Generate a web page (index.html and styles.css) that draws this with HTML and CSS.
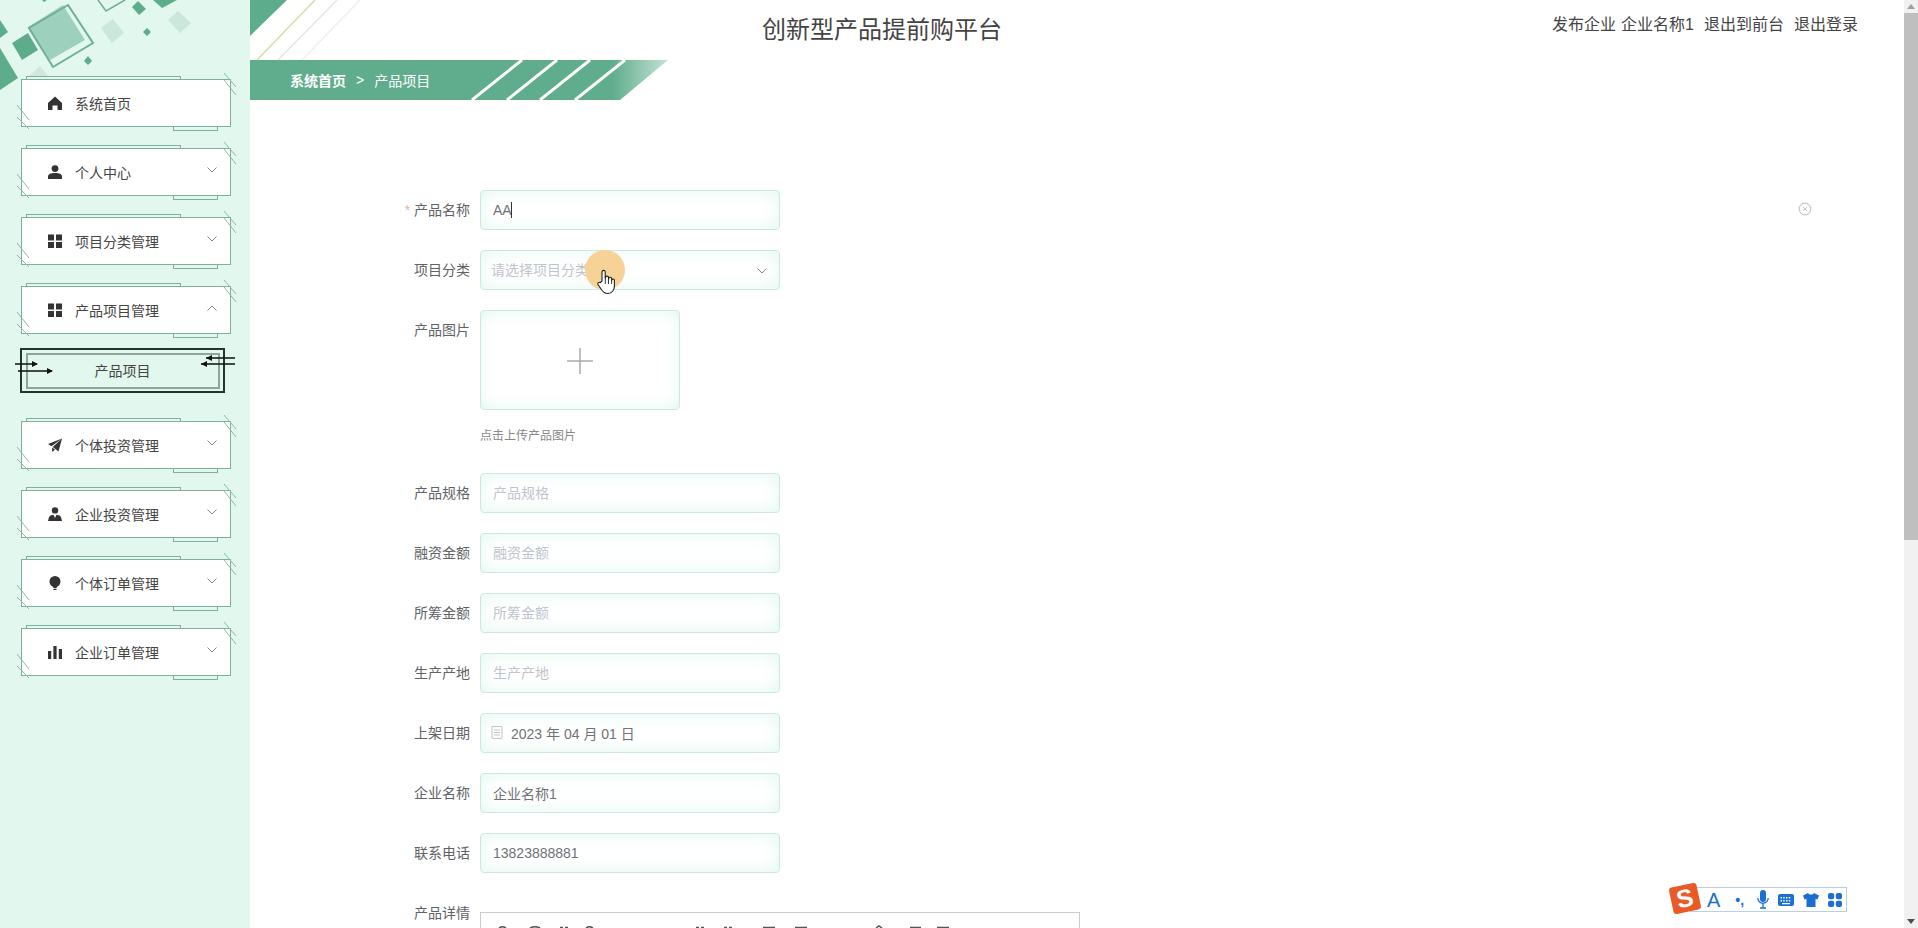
FILE: index.html
```html
<!DOCTYPE html>
<html lang="zh-CN">
<head>
    <meta charset="UTF-8">
    <title>创新型产品提前购平台</title>
    <link rel="stylesheet" href="styles.css">
</head>
<body>
    <svg class="defs" width="0" height="0">
        <symbol id="hatch" viewBox="0 0 230 64">
            <path d="M210 2l12 14M210 9l12 15M3 34l12 15M3 46l12 12" fill="none" stroke="#8db9a8" stroke-width="1"/>
        </symbol>
        <symbol id="chevron" viewBox="0 0 10 6">
            <path d="M0.5 0.5L5 5L9.5 0.5" fill="none" stroke="#666" stroke-width="0.8"/>
        </symbol>
    </svg>

    <div class="layout">
        <aside class="sidebar">
            <svg class="side-deco" width="250" height="90" viewBox="0 0 250 90">
                <path d="M40 66l9 11H28z" fill="#cfe8dd"/>
                <path d="M63 5l22 35-35 20-22-33z" fill="#9ed1bd"/>
                <path d="M68 5l25 38-40 24-24-39z" fill="none" stroke="#6fae97" stroke-width="2"/>
                <path d="M28 33l10 17-16 10-10-17zM0 48l18 30L0 90zM0 20l8 12-8 6zM138 1l8 8-7 6-7-8zM153 0l9 8 15-8zM42 0l2 2 3-2zM88 56l4 5-4 4-4-4zM147 28l4 4-4 4-4-4z" fill="#5dad8c"/>
                <path d="M113 19l11 14-12 10-11-15zM178 11l13 12-11 10-12-13z" fill="#cbe7db"/>
                <path d="M98 0l8 11 19-11" fill="none" stroke="#6fae97" stroke-width="1.5"/>
            </svg>
            <nav class="menu">
                <a class="menu-item">
                    <svg class="hatch"><use href="#hatch"/></svg>
                    <svg class="menu-icon" viewBox="0 0 14 14"><path d="M7 0.5L14 7V14H9.500V9.500H4.500V14H0V7z" fill="#333"/></svg>
                    系统首页
                </a>
                <a class="menu-item">
                    <svg class="hatch"><use href="#hatch"/></svg>
                    <svg class="menu-icon" viewBox="0 0 14 14"><circle cx="7" cy="3.600" r="3.400" fill="#333"/><path d="M0 14V11.500C0 9 3 8 7 8s7 1 7 3.500V14z" fill="#333"/></svg>
                    个人中心
                    <svg class="arrow"><use href="#chevron"/></svg>
                </a>
                <a class="menu-item">
                    <svg class="hatch"><use href="#hatch"/></svg>
                    <svg class="menu-icon" viewBox="0 0 14 14"><path d="M0 0.500h6v6H0zM8 0.500h6v6H8zM0 8h6v6H0zM8 8h6v6H8z" fill="#333"/></svg>
                    项目分类管理
                    <svg class="arrow"><use href="#chevron"/></svg>
                </a>
                <a class="menu-item">
                    <svg class="hatch"><use href="#hatch"/></svg>
                    <svg class="menu-icon" viewBox="0 0 14 14"><path d="M0 0.500h6v6H0zM8 0.500h6v6H8zM0 8h6v6H0zM8 8h6v6H8z" fill="#333"/></svg>
                    产品项目管理
                    <svg class="arrow arrow-up"><use href="#chevron"/></svg>
                </a>
                <a class="sub-item">
                    <svg class="sub-arrows" width="230" height="30" viewBox="0 0 230 30">
                        <path d="M0 6h22M3 13h34M220 0h-29M220 6h-34" stroke="#111" stroke-width="1.300" fill="none"/>
                        <path d="M17 3l6 3-6 3zM32 10l6 3-6 3zM197 -3l-6 3 6 3zM192 3l-6 3 6 3z" fill="#111"/>
                    </svg>
                    <span class="sub-inner">产品项目</span>
                </a>
                <a class="menu-item">
                    <svg class="hatch"><use href="#hatch"/></svg>
                    <svg class="menu-icon" viewBox="0 0 14 14"><path d="M14 0.500L0 6l3.500 2.200zM14 0.500L4.800 9 10.500 13.500zM4 9.500L4.300 14 7 11.500z" fill="#333"/></svg>
                    个体投资管理
                    <svg class="arrow"><use href="#chevron"/></svg>
                </a>
                <a class="menu-item">
                    <svg class="hatch"><use href="#hatch"/></svg>
                    <svg class="menu-icon" viewBox="0 0 14 14"><circle cx="7" cy="3.400" r="3.200" fill="#333"/><path d="M0 14L1 10C2 8.500 4 8 5.500 7.800L7 11l1.500-3.200C10 8 12 8.500 13 10l1 4z" fill="#333"/></svg>
                    企业投资管理
                    <svg class="arrow"><use href="#chevron"/></svg>
                </a>
                <a class="menu-item">
                    <svg class="hatch"><use href="#hatch"/></svg>
                    <svg class="menu-icon" viewBox="0 0 14 14"><circle cx="7" cy="5.500" r="5.500" fill="#333"/><path d="M4.500 9.500h5l-1 2.500h-3zM5.500 12.800h3V14h-3z" fill="#333"/></svg>
                    个体订单管理
                    <svg class="arrow"><use href="#chevron"/></svg>
                </a>
                <a class="menu-item">
                    <svg class="hatch"><use href="#hatch"/></svg>
                    <svg class="menu-icon" viewBox="0 0 14 14"><path d="M0 6h3.200v8H0zM5.400 1h3.200v13H5.400zM10.800 4H14v10h-3.200z" fill="#333"/></svg>
                    企业订单管理
                    <svg class="arrow"><use href="#chevron"/></svg>
                </a>
            </nav>
        </aside>

        <main class="main">
            <svg class="top-deco" width="130" height="60" viewBox="0 0 130 60">
                <path d="M0 0h37L0 36z" fill="#5dad8c"/>
                <path d="M65 0L7 60" stroke="#d6dda6" stroke-width="1.500"/>
                <path d="M87 0L28 60" stroke="#e6e6e6" stroke-width="1.500"/>
                <path d="M110 0L52 60" stroke="#efefef" stroke-width="1.500"/>
            </svg>
            <header class="header">
                <h1 class="title">创新型产品提前购平台</h1>
                <div class="user-links">
                    <span>发布企业</span>
                    <span class="user-name">企业名称1</span>
                    <a>退出到前台</a>
                    <a>退出登录</a>
                </div>
            </header>

            <div class="crumb">
                <svg class="crumb-bg" width="418" height="40" viewBox="0 0 418 40">
                    <defs>
                        <linearGradient id="crumbFade" x1="362" y1="0" x2="418" y2="0" gradientUnits="userSpaceOnUse">
                            <stop offset="0" stop-color="#5fad8c"/>
                            <stop offset="1" stop-color="#c4e2d5"/>
                        </linearGradient>
                    </defs>
                    <path d="M0 0H418L370 40H0z" fill="url(#crumbFade)"/>
                    <path d="M272 0L222 40M307 0L257 40M340 0L290 40M375 0L325 40" stroke="#fff" stroke-width="3"/>
                </svg>
                <b class="crumb-home">系统首页</b>
                <span class="crumb-sep">&gt;</span>
                <span>产品项目</span>
            </div>

            <form class="form">
                <div class="form-row">
                    <label class="form-label"><i class="required">*</i> 产品名称</label>
                    <div class="field-wrap">
                        <input class="field" type="text" value="AA">
                        <span class="caret"></span>
                    </div>
                    <svg class="clear-icon" width="14" height="14" viewBox="0 0 14 14">
                        <circle cx="7" cy="7" r="5.800" fill="none" stroke="#c8c8c8" stroke-width="1.200"/>
                        <path d="M5 5l4 4M9 5l-4 4" stroke="#c0c0c0"/>
                    </svg>
                </div>
                <div class="form-row">
                    <label class="form-label">项目分类</label>
                    <div class="field-wrap">
                        <input class="field field-select" type="text" placeholder="请选择项目分类">
                        <svg class="select-arrow"><use href="#chevron"/></svg>
                    </div>
                </div>
                <div class="form-row">
                    <label class="form-label">产品图片</label>
                    <div>
                        <div class="upload">
                            <svg width="26" height="26" viewBox="0 0 26 26"><path d="M13 0v26M0 13h26" stroke="#aaa" stroke-width="1.500"/></svg>
                        </div>
                        <p class="upload-tip">点击上传产品图片</p>
                    </div>
                </div>
                <div class="form-row">
                    <label class="form-label">产品规格</label>
                    <input class="field" type="text" placeholder="产品规格">
                </div>
                <div class="form-row">
                    <label class="form-label">融资金额</label>
                    <input class="field" type="text" placeholder="融资金额">
                </div>
                <div class="form-row">
                    <label class="form-label">所筹金额</label>
                    <input class="field" type="text" placeholder="所筹金额">
                </div>
                <div class="form-row">
                    <label class="form-label">生产产地</label>
                    <input class="field" type="text" placeholder="生产产地">
                </div>
                <div class="form-row">
                    <label class="form-label">上架日期</label>
                    <div class="field-wrap">
                        <input class="field field-date" type="text" value="2023 年 04 月 01 日">
                        <svg class="date-icon" width="12" height="13" viewBox="0 0 12 13">
                            <path d="M1 0.500h10v12H1zM3 4h6M3 6.500h6M3 9h6" fill="none" stroke="#c4c4c4"/>
                        </svg>
                    </div>
                </div>
                <div class="form-row">
                    <label class="form-label">企业名称</label>
                    <input class="field" type="text" value="企业名称1">
                </div>
                <div class="form-row">
                    <label class="form-label">联系电话</label>
                    <input class="field" type="text" value="13823888881">
                </div>
                <div class="form-row">
                    <label class="form-label">产品详情</label>
                    <div class="editor">
                        <svg class="editor-tools" width="600" height="20" viewBox="0 0 600 20">
                            <path d="M18 15q3.500-2.500 7 0M49 15q5-2.500 10 0M79 14.500h3M84 14.500h3M105 15q3.500-2.500 7 0M215 14.500h3M220 14.500h3M243 14.500h3M248 14.500h3M282 14.500h12M314 14.500h12M395 15l3-2 3 2M429 14.500h11M456 14.500h12" fill="none" stroke="#555" stroke-width="1.500"/>
                        </svg>
                    </div>
                </div>
            </form>
        </main>

        <div class="scrollbar">
            <span class="scroll-up"></span>
            <span class="scroll-thumb"></span>
            <span class="scroll-down"></span>
        </div>
    </div>

    <!-- 鼠标点击高亮 -->
    <div class="click-mark">
        <svg class="hand" width="20" height="26" viewBox="0 0 20 26">
            <path d="M5 12V3a1.600 1.600 0 0 1 3.200 0v7l0.300-1.500a1.500 1.500 0 0 1 3 0.300V10.500l0.300-1a1.400 1.400 0 0 1 2.800 0.400v1.600l0.300-0.700a1.300 1.300 0 0 1 2.500 0.500V17c0 4-2.400 7.500-6.500 7.500-3.500 0-5-1.500-6.500-4L1 15.500c-0.800-1.500 1-3 2.200-1.800z" fill="#fff" stroke="#222" stroke-width="1.100"/>
            <path d="M8.300 10v5M11.500 10v5M14.600 11v4" stroke="#222" stroke-width="0.900"/>
        </svg>
    </div>

    <!-- 搜狗输入法状态栏 -->
    <div class="ime-bar">
        <span class="ime-logo">S</span>
        <span class="ime-a">A</span>
        <span class="ime-punc">•,</span>
        <svg width="12" height="19" viewBox="0 0 12 19"><path d="M3 3a3 3 0 0 1 6 0v6a3 3 0 0 1-6 0z" fill="#1b6fd0"/><path d="M0.800 8a5.200 5.200 0 0 0 10.400 0M6 13.500V18M3 18h6" fill="none" stroke="#1b6fd0" stroke-width="1.300"/></svg>
        <svg width="16" height="12" viewBox="0 0 16 12"><rect width="16" height="12" rx="2" fill="#1b6fd0"/><path d="M2.500 3h1.500v1.500H2.500zM5.200 3h1.500v1.500H5.200zM8 3h1.500v1.500H8zM10.800 3h1.500v1.500h-1.500zM2.500 6h1.500v1.500H2.500zM5.200 6h1.500v1.500H5.200zM8 6h1.500v1.500H8zM10.800 6h1.500v1.500h-1.500zM4 9h8v1.200H4z" fill="#fff"/></svg>
        <svg width="16" height="14" viewBox="0 0 16 14"><path d="M5 0L0 2.500 1.500 6.500 3.500 5.800V14H12.500V5.800L14.500 6.500 16 2.500 11 0C10 2 6 2 5 0z" fill="#1b6fd0"/></svg>
        <svg width="14" height="14" viewBox="0 0 14 14"><rect width="6.200" height="6.200" rx="2" fill="#1b6fd0"/><rect x="7.800" width="6.200" height="6.200" rx="2" fill="#1b6fd0"/><rect y="7.800" width="6.200" height="6.200" rx="2" fill="#1b6fd0"/><rect x="7.800" y="7.800" width="6.200" height="6.200" rx="2" fill="#1b6fd0"/></svg>
    </div>
</body>
</html>
```

FILE: styles.css
```css
* {
    box-sizing: border-box;
}

html, body {
    margin: 0;
    height: 928px;
    overflow: hidden;
    background: #fff;
    font-family: "Liberation Sans", "Noto Sans CJK SC", sans-serif;
    font-size: 14px;
    color: #444;
}

.defs {
    position: absolute;
}

.layout {
    display: flex;
    height: 928px;
}

/* 左侧菜单 */
.sidebar {
    position: relative;
    flex: 0 0 250px;
    background: #e2f7ee;
    padding: 79px 0 0 21px;
}

.side-deco {
    position: absolute;
    left: 0;
    top: 0;
}

.menu {
    position: relative;
    display: flex;
    flex-direction: column;
    gap: 21px;
}

.menu-item {
    position: relative;
    display: flex;
    align-items: center;
    width: 210px;
    height: 48px;
    padding-left: 26px;
    background: #fff;
    border: 1px solid #7fb09e;
    color: #444;
}

.menu-item:before {
    content: '';
    position: absolute;
    left: 4px;
    top: -4px;
    width: 153px;
    height: 3px;
    border: 1px solid #7fb09e;
    border-bottom: 0;
}

.menu-item:after {
    content: '';
    position: absolute;
    left: 151px;
    bottom: -5px;
    width: 43px;
    height: 4px;
    border: 1px solid #7fb09e;
    border-top: 0;
}

.hatch {
    position: absolute;
    left: -8px;
    top: -9px;
    width: 230px;
    height: 64px;
}

.menu-icon {
    width: 14px;
    height: 14px;
    margin-right: 13px;
}

.arrow {
    position: absolute;
    right: 13px;
    top: 18px;
    width: 10px;
    height: 6px;
}

.arrow-up {
    transform: rotate(180deg);
}

.sub-item {
    position: relative;
    display: block;
    width: 205px;
    height: 45px;
    margin: -7px 0 7px -1px;
    padding: 3px 3px 2px 4px;
    border: 2px solid #23362e;
}

.sub-inner {
    display: flex;
    align-items: center;
    justify-content: center;
    height: 100%;
    padding: 0 1px 2px 0;
    border: 2px solid #8fa59c;
    color: #444;
}

.sub-arrows {
    position: absolute;
    left: -7px;
    top: 8px;
    overflow: visible;
}

/* 顶部 */
.main {
    position: relative;
    flex: 1;
    min-width: 0;
}

.top-deco {
    position: absolute;
    left: 0;
    top: 0;
}

.header {
    display: flex;
    justify-content: space-between;
    height: 60px;
    padding: 0 46px 0 512px;
}

.title {
    margin: 0;
    font-size: 24px;
    font-weight: normal;
    line-height: 60px;
    color: #444;
}

.user-links {
    display: flex;
    gap: 10px;
    font-size: 16px;
    line-height: 50px;
    color: #444;
}

.user-name {
    margin-left: -5px;
}

.crumb {
    position: relative;
    display: flex;
    align-items: center;
    width: 418px;
    height: 40px;
    padding-left: 40px;
    color: #fff;
}

.crumb-bg {
    position: absolute;
    left: 0;
    top: 0;
}

.crumb-home, .crumb-sep, .crumb span {
    position: relative;
}

.crumb-sep {
    margin: 0 10px;
}

/* 表单 */
.form {
    margin-top: 90px;
    padding: 0 92px 0 110px;
}

.form-row {
    display: flex;
    align-items: flex-start;
    gap: 10px;
    margin-bottom: 20px;
}

.form-label {
    flex: 0 0 110px;
    line-height: 40px;
    text-align: right;
    color: #606266;
}

.required {
    font-style: normal;
    color: #f56c6c;
    opacity: .6;
}

.field-wrap {
    position: relative;
    width: 300px;
    height: 40px;
}

.field {
    display: block;
    width: 300px;
    height: 40px;
    padding: 0 12px;
    border: 1px solid #cfe8df;
    border-radius: 4px;
    background: #fff;
    box-shadow: inset 0 0 18px #e2f7ee;
    font: inherit;
    color: #707276;
    outline: none;
}

.field::placeholder {
    color: #c0c4cc;
}

.field-select {
    padding-left: 10px;
}

.field-date {
    padding-left: 30px;
}

.caret {
    position: absolute;
    left: 31px;
    top: 12px;
    width: 1px;
    height: 16px;
    background: #333;
}

.select-arrow {
    position: absolute;
    right: 13px;
    top: 18px;
    width: 10px;
    height: 6px;
}

.date-icon {
    position: absolute;
    left: 11px;
    top: 13px;
}

.clear-icon {
    margin: 12px 0 0 auto;
}

.upload {
    display: flex;
    align-items: center;
    justify-content: center;
    width: 200px;
    height: 100px;
    padding-top: 2px;
    border: 1px solid #cfe8df;
    border-radius: 4px;
    box-shadow: inset 0 0 18px #e2f7ee;
}

.upload-tip {
    margin: 16px 0 7px;
    font-size: 12px;
    line-height: 20px;
    color: #888;
}

.editor {
    width: 600px;
    height: 60px;
    margin-top: 19px;
    border: 1px solid #ccc;
}

.editor-tools {
    display: block;
}

/* 滚动条 */
.scrollbar {
    display: flex;
    flex-direction: column;
    flex: 0 0 14px;
    background: #f1f1f1;
}

.scroll-up, .scroll-down {
    flex: 0 0 13px;
    position: relative;
}

.scroll-up:after, .scroll-down:after {
    content: '';
    position: absolute;
    left: 3px;
    border-left: 4px solid transparent;
    border-right: 4px solid transparent;
}

.scroll-up:after {
    top: 4px;
    border-bottom: 5px solid #a0a0a0;
}

.scroll-down:after {
    top: 4px;
    border-top: 5px solid #505050;
}

.scroll-thumb {
    flex: 0 0 527px;
    margin-bottom: auto;
    background: #bfbfbf;
}

/* 鼠标点击高亮 */
.click-mark {
    position: absolute;
    left: 585px;
    top: 250px;
    width: 40px;
    height: 40px;
    border-radius: 50%;
    background: #f6d296;
}

.hand {
    position: absolute;
    left: 12px;
    top: 19px;
}

/* 输入法状态栏 */
.ime-bar {
    position: absolute;
    left: 1690px;
    top: 887px;
    display: flex;
    align-items: center;
    gap: 9px;
    width: 157px;
    height: 25px;
    padding-left: 16px;
    background: #fff;
    border: 1px solid #b8cfe8;
    color: #1b6fd0;
}

.ime-logo {
    position: absolute;
    left: -20px;
    top: -3px;
    width: 28px;
    height: 27px;
    border-radius: 3px;
    background: #ea5a26;
    transform: rotate(-12deg);
    font-size: 25px;
    font-weight: bold;
    line-height: 27px;
    text-align: center;
    color: #fff;
}

.ime-a {
    font-size: 20px;
    line-height: 1;
}

.ime-punc {
    width: 12px;
    margin: 0 1px 0 6px;
    font-size: 14px;
    font-weight: bold;
}
```
